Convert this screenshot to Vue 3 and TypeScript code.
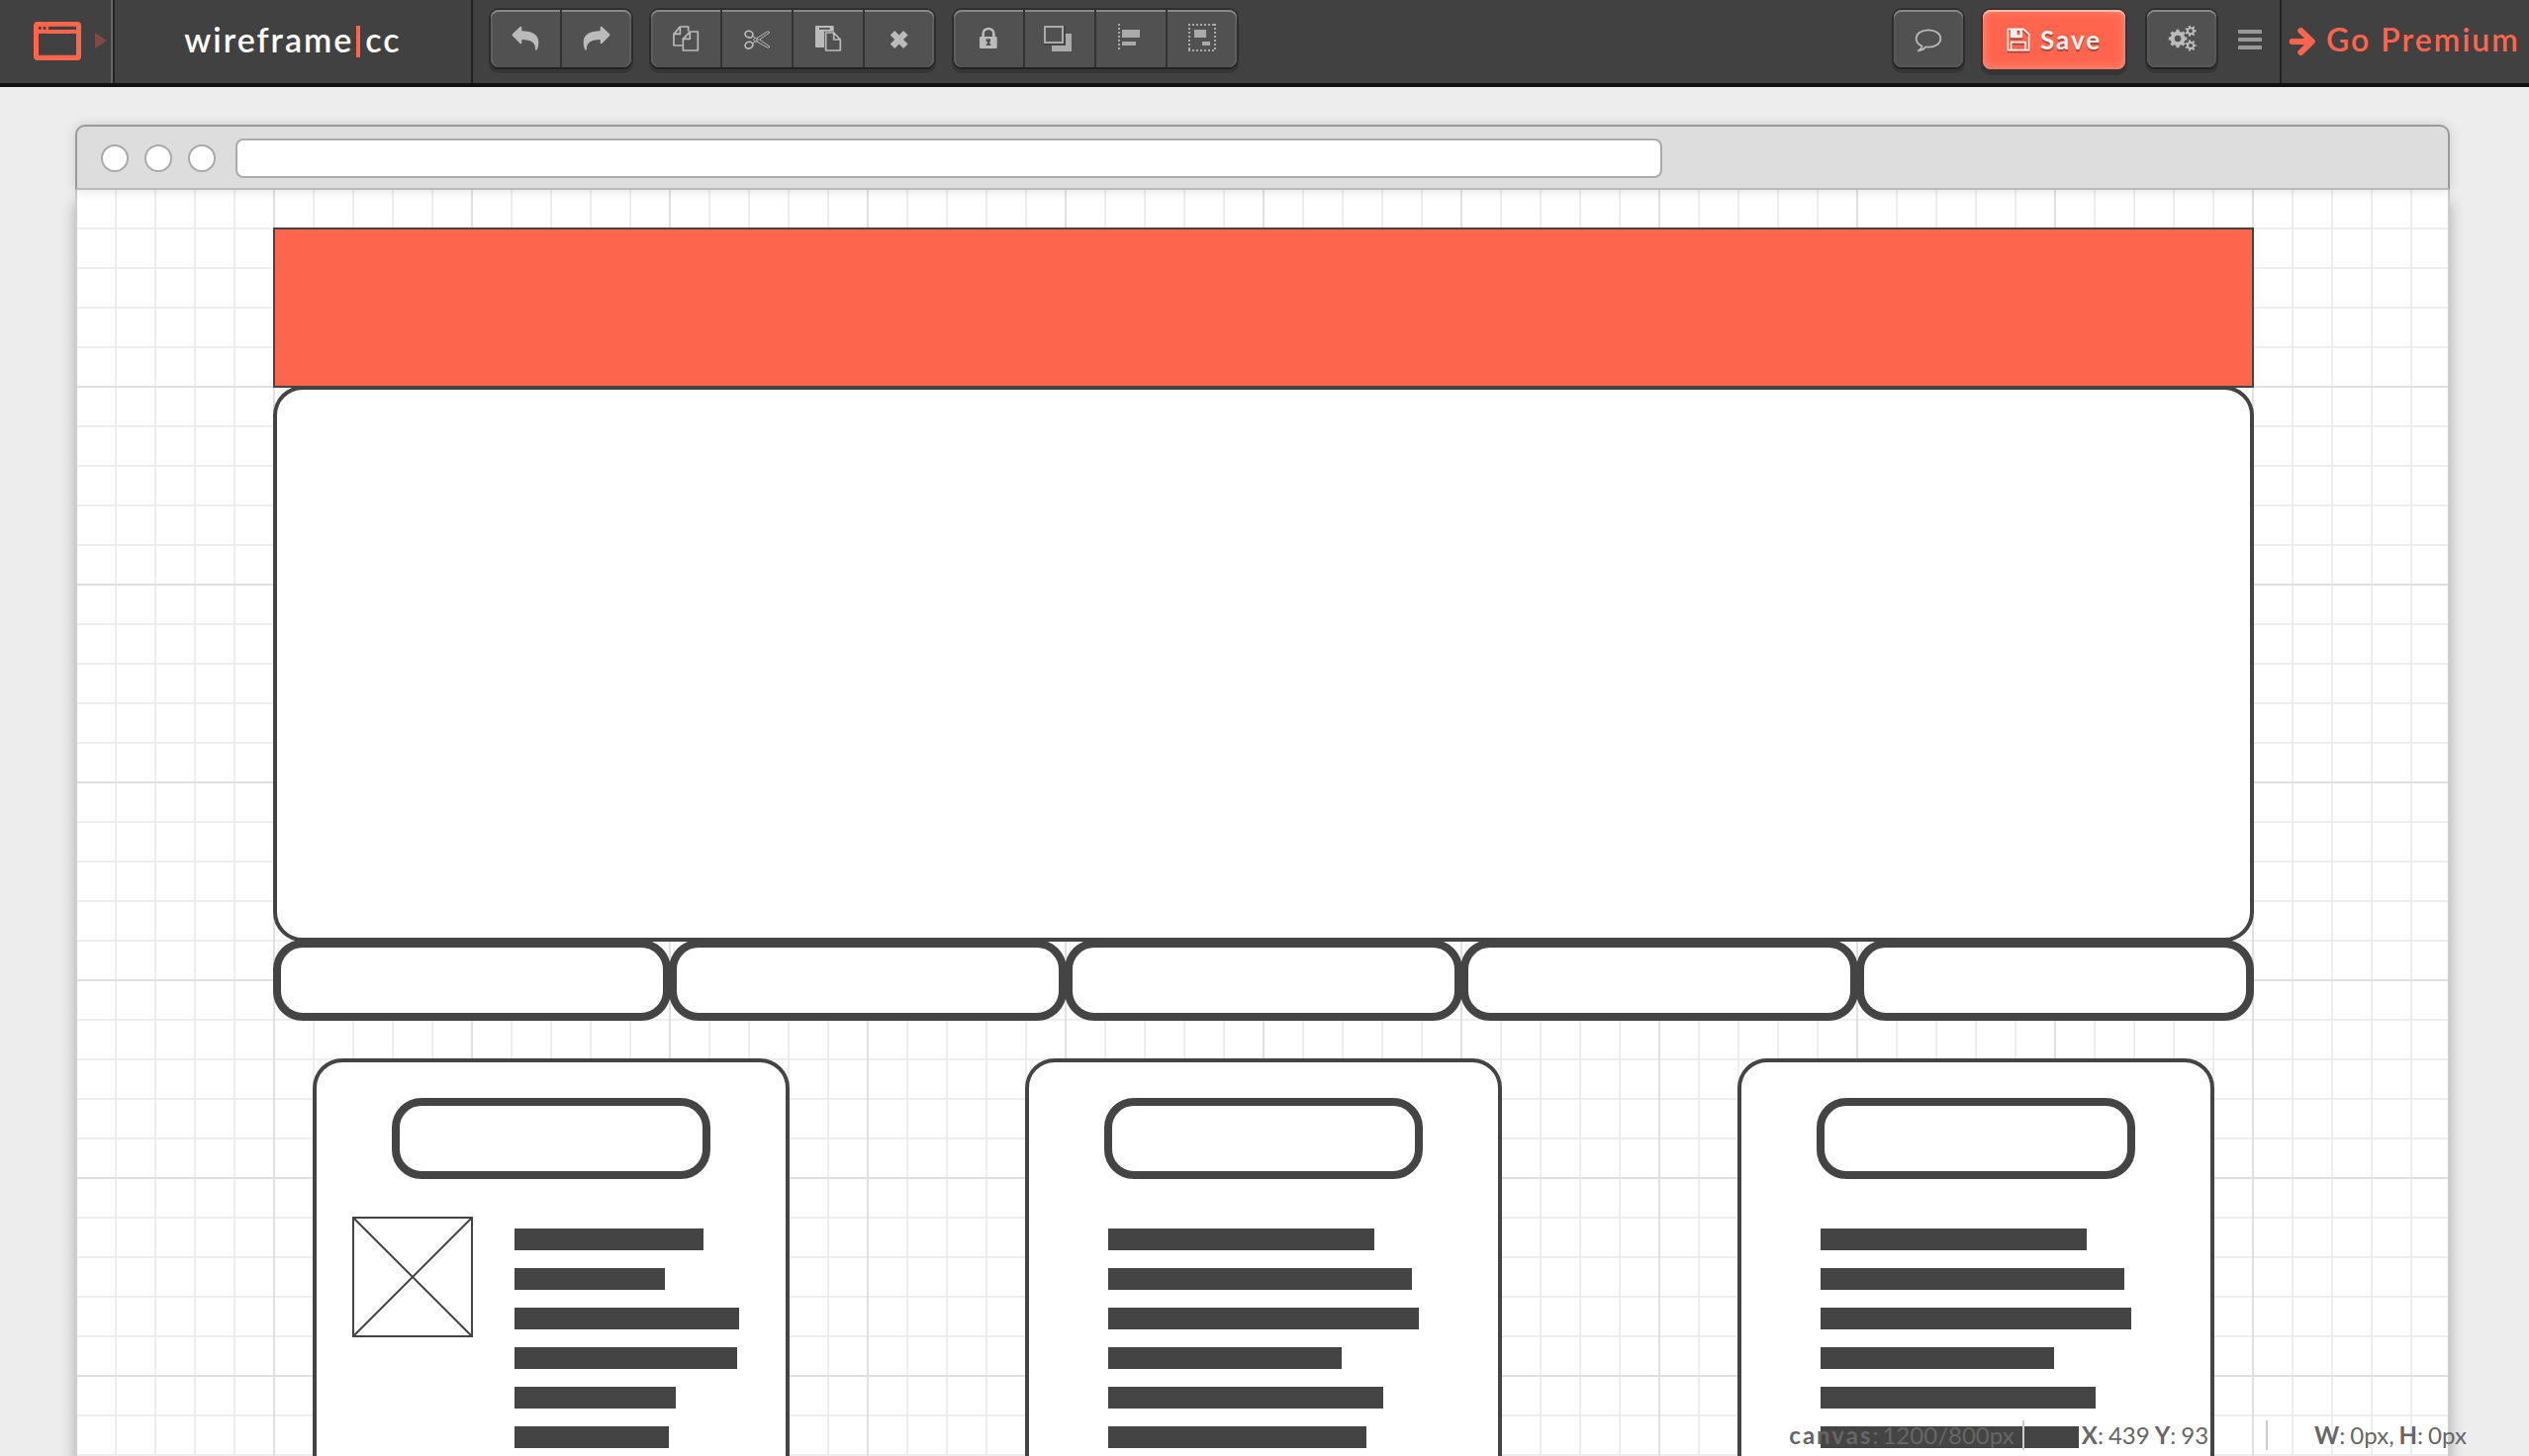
<script setup lang="ts">
interface Tool {
  name: string
  icon: string
}

interface Card {
  picture: boolean
  lines: number[]
}

const groups: Tool[][] = [
  [
    { name: 'Undo', icon: 'undo' },
    { name: 'Redo', icon: 'redo' },
  ],
  [
    { name: 'Copy', icon: 'copy' },
    { name: 'Cut', icon: 'cut' },
    { name: 'Paste', icon: 'paste' },
    { name: 'Delete', icon: 'delete' },
  ],
  [
    { name: 'Lock', icon: 'lock' },
    { name: 'Arrange', icon: 'layers' },
    { name: 'Align', icon: 'align' },
    { name: 'Group', icon: 'group' },
  ],
]

const tabs = 5

const cards: Card[] = [
  { picture: true, lines: [191, 152, 227, 225, 163, 156, 210] },
  { picture: false, lines: [269, 307, 314, 236, 278, 261, 290] },
  { picture: false, lines: [269, 307, 314, 236, 278, 261, 290] },
]

function gear(cx: number, cy: number, outer: number, inner: number, hole: number, teeth: number): string {
  const points: string[] = []
  const step = (Math.PI * 2) / teeth
  for (let i = 0; i < teeth; i++) {
    const a = i * step
    const corners: [number, number][] = [
      [-0.3, inner],
      [-0.2, outer],
      [0.2, outer],
      [0.3, inner],
    ]
    for (const [offset, r] of corners) {
      const t = a + offset * step
      points.push(`${(cx + r * Math.cos(t)).toFixed(1)} ${(cy + r * Math.sin(t)).toFixed(1)}`)
    }
  }
  const ring = `M${cx - hole} ${cy}a${hole} ${hole} 0 1 0 ${hole * 2} 0a${hole} ${hole} 0 1 0 ${-hole * 2} 0Z`
  return `M${points.join('L')}Z${ring}`
}

const gears = gear(93, 87, 28, 22, 10, 8) + gear(132, 64, 17, 12, 6, 7) + gear(132, 108, 17, 12, 6, 7)
</script>

<template>
  <div class="app">
    <header class="toolbar">
      <button class="stencil" type="button" aria-label="Browser window">
        <svg class="window-icon" viewBox="0 0 144 117" aria-hidden="true">
          <path
            fill-rule="evenodd"
            d="M12 0H132Q144 0 144 12V105Q144 117 132 117H12Q0 117 0 105V12Q0 0 12 0ZM15 36V101H129V36ZM45 14V24H129V14ZM14 19a5 5 0 1 0 10 0a5 5 0 1 0 -10 0ZM28 19a5 5 0 1 0 10 0a5 5 0 1 0 -10 0Z"
          />
        </svg>
        <span class="caret"></span>
      </button>
      <a class="brand" href="#">wireframe<i class="pipe"></i>cc</a>

      <nav class="tools" aria-label="Editing">
        <div v-for="(group, g) in groups" :key="g" class="group">
          <button v-for="tool in group" :key="tool.name" class="tool" type="button" :aria-label="tool.name">
            <svg class="glyph" viewBox="0 0 210 174" aria-hidden="true">
              <path
                v-if="tool.icon === 'undo' || tool.icon === 'redo'"
                :transform="tool.icon === 'redo' ? 'translate(210 0) scale(-1 1)' : undefined"
                d="M66 73L89 51Q94 48 94 54V64C124 64 145 74 145 98C145 108 143 116 139 122L135 121C137 101 124 90 94 90V99Q94 105 89 102L66 79Q64 76 66 73Z"
              />
              <g v-else-if="tool.icon === 'copy'" class="outline">
                <path d="M95 108H69V73L88 51H113V65M88 51V73H69" />
                <path class="sheet" d="M97 123V88L118 66H142V123ZM118 66V88H97" />
              </g>
              <g v-else-if="tool.icon === 'cut'" class="outline">
                <ellipse cx="81" cy="74" rx="12" ry="10" transform="rotate(20 81 74)" />
                <ellipse cx="81" cy="107" rx="12" ry="10" transform="rotate(-20 81 107)" />
                <path
                  class="fine"
                  d="M92 80L103 87L136 66Q143 64 143 69L113 90L143 111Q143 116 136 114L103 95L92 101M101 84L94 90L101 97"
                />
                <circle class="fine" cx="106" cy="91" r="3" />
              </g>
              <g v-else-if="tool.icon === 'paste'">
                <path fill-rule="evenodd" d="M69 48H119Q122 48 122 51V114H69Q66 114 66 111V51Q66 48 69 48ZM78 54V59H110V54Z" />
                <path class="cover" d="M93 65H124L146 86V128H93Z" />
                <path class="outline" d="M98 69V123H142V90L122 69ZM122 69V90H142" />
              </g>
              <path v-else-if="tool.icon === 'delete'" class="cross" d="M84 70L124 110M124 70L84 110" />
              <g v-else-if="tool.icon === 'lock'">
                <path class="shackle" d="M89 82V72C89 52 121 52 121 72V82" />
                <path
                  fill-rule="evenodd"
                  d="M82 81H128Q131 81 131 84V113Q131 117 127 117H83Q78 117 78 113V84Q78 81 82 81ZM98 88V97H102V103H98V108H112V103H109V97H111V88Z"
                />
              </g>
              <g v-else-if="tool.icon === 'layers'" class="dim">
                <path d="M81 72H141V126H81Z" />
                <path class="gap" d="M57 48H123V108H57Z" />
                <path class="cover" d="M60 51H114V99H60Z" />
                <path fill-rule="evenodd" d="M57 48H117V102H57ZM63 54V96H111V54Z" />
              </g>
              <g v-else-if="tool.icon === 'align'" class="dim">
                <path class="dots" d="M69 42V126" />
                <path d="M78 60H132V84H78ZM78 96H120V108H78Z" />
              </g>
              <g v-else class="dim">
                <path class="dots" d="M63 45H147M63 123H147M66 42V126M144 42V126" />
                <path d="M81 60H117V84H81ZM105 96H129V108H105Z" />
              </g>
            </svg>
          </button>
        </div>
      </nav>

      <div class="actions">
        <div class="group">
          <button class="tool" type="button" aria-label="Comments">
            <svg class="glyph" viewBox="0 0 210 174" aria-hidden="true">
              <path
                class="bubble"
                d="M86 110C74 105 68 96 68 87C68 72 84 61 105 61S142 72 142 87S126 113 105 113C102 113 99 113 97 112C91 119 83 123 74 124C82 119 85 115 86 110Z"
              />
            </svg>
          </button>
        </div>
        <button class="save" type="button">
          <svg class="floppy" viewBox="0 0 72 72" aria-hidden="true">
            <path class="floppy-line" d="M4 4H51L68 20V68H4ZM14 68V44H57V68M14 4V28H46V4" />
            <path class="floppy-fill" fill-rule="evenodd" d="M14 4H46V28H14ZM32 8V22H40V8Z" />
          </svg>
          Save
        </button>
        <div class="group">
          <button class="tool" type="button" aria-label="Settings">
            <svg class="glyph" viewBox="0 0 210 174" aria-hidden="true">
              <path fill-rule="evenodd" :d="gears" />
            </svg>
          </button>
        </div>
        <button class="menu" type="button" aria-label="Menu"><i></i><i></i><i></i></button>
      </div>
      <a class="premium" href="#">
        <svg class="arrow" viewBox="0 0 84 84" aria-hidden="true">
          <path d="M11 42H64" />
          <path class="head" d="M37 9L71 42L37 75" />
        </svg>
        Go Premium
      </a>
    </header>

    <main class="browser">
      <div class="chrome">
        <i class="dot"></i><i class="dot"></i><i class="dot"></i>
        <input class="address" type="text" aria-label="Address" />
      </div>
      <div class="canvas">
        <div class="banner"></div>
        <div class="hero"></div>
        <div class="tabs">
          <div v-for="n in tabs" :key="n" class="tab"></div>
        </div>
        <div class="cards">
          <section v-for="(card, c) in cards" :key="c" class="card">
            <div class="title"></div>
            <div class="body" :class="{ pictured: card.picture }">
              <svg v-if="card.picture" class="picture" viewBox="0 0 122 122" aria-hidden="true">
                <path d="M1 1H121V121H1Z" />
                <path d="M1 1L121 121M121 1L1 121" />
              </svg>
              <div class="lines">
                <div v-for="(w, i) in card.lines" :key="i" class="line" :style="{ width: w + 'px' }"></div>
              </div>
            </div>
          </section>
        </div>
      </div>
    </main>

    <footer class="status">
      <div class="cell size">
        <span><b class="wide">canvas</b>:</span><span>1200/800px</span>
      </div>
      <div class="cell position">
        <span><b>X</b>:</span><span>439</span><span><b>Y</b>:</span><span>93</span>
      </div>
      <div class="cell extent">
        <span><b>W</b>:</span><span>0px,</span><span><b>H</b>:</span><span>0px</span>
      </div>
    </footer>
  </div>
</template>

<style>
body {
  margin: 0;
  background: #ededed;
}
</style>

<style scoped>
.app {
  position: relative;
  height: 100vh;
  overflow: hidden;
  background: #ededed;
  font-family: Lato, 'Open Sans', sans-serif;
}

.app *,
.app {
  box-sizing: border-box;
}

button {
  margin: 0;
  padding: 0;
  border: 0;
  background: none;
  font: inherit;
  color: inherit;
}

a {
  text-decoration: none;
}

.toolbar {
  display: flex;
  height: 88px;
  border-bottom: 4px solid #111;
  background: #414141;
}

.stencil {
  display: flex;
  align-items: center;
  gap: 14px;
  width: 116px;
  padding: 0 0 2px 34px;
  border-right: 2px solid #222;
  box-shadow: inset -2px 0 0 #666;
}

.window-icon {
  width: 48px;
  height: 39px;
  fill: #ff654d;
}

.caret {
  border: 8px solid transparent;
  border-left: 12px solid #7e4b44;
  border-right: 0;
}

.brand {
  display: flex;
  align-items: center;
  justify-content: center;
  width: 362px;
  padding-bottom: 6px;
  border-right: 2px solid #222;
  color: #fff;
  font-size: 34px;
  font-weight: 600;
  letter-spacing: 2px;
}

.pipe {
  width: 4px;
  height: 32px;
  margin: 6px 5px 0 3px;
  background: #ff654d;
}

.tools {
  display: flex;
  gap: 20px;
  padding: 10px 0 0 18px;
}

.group {
  display: flex;
  gap: 2px;
  height: 58px;
  border-radius: 8px;
  background: #333;
  box-shadow:
    0 2px 0 #222,
    0 0 0 2px #2e2e2e,
    0 4px 0 2px #353535;
}

.tool {
  width: 70px;
  height: 58px;
  background: #515151;
  box-shadow: inset 0 2px 0 #888;
}

.tool:first-child {
  border-radius: 8px 0 0 8px;
  box-shadow:
    inset 0 2px 0 #888,
    inset 2px 0 0 #5e5e5e;
}

.tool:last-child {
  border-radius: 0 8px 8px 0;
  box-shadow:
    inset 0 2px 0 #888,
    inset -2px 0 0 #5e5e5e;
}

.tool:only-child {
  border-radius: 8px;
  box-shadow:
    inset 0 2px 0 #888,
    inset 0 0 0 2px #585858;
}

.glyph {
  display: block;
  width: 70px;
  height: 58px;
  fill: #bbb;
}

.outline {
  fill: none;
  stroke: #bbb;
  stroke-width: 5px;
  stroke-linejoin: round;
}

.sheet,
.cover {
  fill: #515151;
}

.gap {
  fill: #444;
}

.fine {
  stroke-width: 3px;
}

.cross {
  stroke: #bbb;
  stroke-width: 19px;
}

.shackle {
  fill: none;
  stroke: #bbb;
  stroke-width: 8px;
}

.dim {
  fill: #aaa;
}

.dots {
  fill: none;
  stroke: #aaa;
  stroke-width: 6px;
  stroke-dasharray: 6px 6px;
}

.bubble {
  fill: none;
  stroke: #bbb;
  stroke-width: 5px;
  stroke-linejoin: round;
}

.actions {
  display: flex;
  gap: 20px;
  margin-left: auto;
  padding: 10px 18px 0 0;
}

.actions .group + .menu {
  margin-left: 2px;
}

.save {
  display: flex;
  align-items: center;
  justify-content: center;
  gap: 10px;
  width: 144px;
  height: 60px;
  border-radius: 8px;
  background: #ff654d;
  box-shadow:
    inset 0 2px 0 #ffb8ac,
    inset 0 0 10px #ff9a88,
    0 0 0 2px #353535,
    0 4px 0 2px #353535;
  color: #eee;
  font-size: 26px;
  font-weight: 700;
  letter-spacing: 2px;
  text-shadow: 0 2px 0 #a8483a;
}

.save + .group {
  margin-left: 2px;
}

.floppy {
  width: 24px;
  height: 24px;
  filter: drop-shadow(0 2px 0 #a8483a);
}

.floppy-line {
  fill: none;
  stroke: #eee;
  stroke-width: 5px;
  stroke-linejoin: round;
}

.floppy-fill {
  fill: #eee;
}

.menu {
  display: flex;
  flex-direction: column;
  gap: 4px;
  width: 24px;
  padding-top: 20px;
}

.menu i {
  height: 4px;
  border-radius: 1px;
  background: #999;
}

.premium {
  display: flex;
  align-items: center;
  gap: 10px;
  width: 252px;
  padding: 0 0 6px 7px;
  border-left: 2px solid #222;
  color: #ff654d;
  font-size: 32px;
  font-weight: 600;
  letter-spacing: 2px;
  white-space: nowrap;
}

.arrow {
  flex: none;
  width: 28px;
  height: 28px;
  margin-top: 6px;
  fill: none;
  stroke: #ff654d;
  stroke-width: 18px;
  stroke-linecap: round;
}

.head {
  stroke-width: 18px;
  stroke-linejoin: round;
}

.browser {
  margin: 38px 80px 0 76px;
}

.chrome {
  position: relative;
  display: flex;
  align-items: center;
  gap: 16px;
  height: 66px;
  padding: 2px 24px 0;
  border: 2px solid #999;
  border-bottom-color: #bbb;
  border-radius: 10px 10px 0 0;
  background: #ddd;
  box-shadow: 0 0 12px rgba(0, 0, 0, 0.14);
}

.dot {
  flex: none;
  width: 28px;
  height: 28px;
  border: 2px solid #aaa;
  border-radius: 50%;
  background: #fff;
}

.address {
  flex: 0 1 1442px;
  min-width: 0;
  height: 40px;
  margin-left: 4px;
  padding: 0 12px;
  border: 2px solid #aaa;
  border-radius: 8px;
  background: #fff;
  font: 20px Lato, sans-serif;
}

.canvas {
  padding: 38px 196px 0 198px;
  border: solid #ccc;
  border-width: 0 2px;
  background-color: #fff;
  background-image:
    linear-gradient(to right, #e0e0e0 2px, transparent 2px),
    linear-gradient(to bottom, #e0e0e0 2px, transparent 2px),
    linear-gradient(to right, #eee 2px, transparent 2px),
    linear-gradient(to bottom, #eee 2px, transparent 2px);
  background-position:
    198px 0,
    0 198px,
    38px 0,
    0 38px;
  background-size:
    200px 200px,
    200px 200px,
    40px 40px,
    40px 40px;
  box-shadow: 0 12px 14px rgba(0, 0, 0, 0.28);
}

.banner {
  height: 162px;
  border: 2px solid #444;
  background: #fd654d;
}

.hero {
  height: 562px;
  margin-top: -2px;
  border: 4px solid #444;
  border-radius: 30px;
  background: #fff;
}

.tabs {
  display: flex;
  margin-top: -2px;
}

.tab {
  flex: 1;
  height: 82px;
  border: 8px solid #444;
  border-radius: 30px;
  background: #fff;
}

.tab + .tab {
  margin-left: -2px;
}

.cards {
  display: flex;
  justify-content: space-between;
  margin-top: 38px;
  padding: 0 40px;
}

.card {
  width: 482px;
  height: 602px;
  padding-top: 36px;
  border: 4px solid #444;
  border-radius: 30px;
  background: #fff;
}

.title {
  width: 322px;
  height: 82px;
  margin: 0 auto;
  border: 8px solid #444;
  border-radius: 30px;
}

.body {
  display: flex;
  gap: 42px;
  margin-top: 38px;
  padding-left: 80px;
}

.pictured {
  padding-left: 36px;
}

.picture {
  flex: none;
  width: 122px;
  height: 122px;
  fill: none;
  stroke: #444;
  stroke-width: 2px;
}

.lines {
  display: flex;
  flex-direction: column;
  gap: 18px;
  padding-top: 12px;
}

.line {
  height: 22px;
  background: #444;
}

.status {
  position: absolute;
  right: 16px;
  bottom: 6px;
  display: flex;
  color: #666;
  font-size: 24px;
  line-height: 30px;
}

.cell {
  display: flex;
  justify-content: center;
  gap: 5px;
  width: 248px;
  white-space: nowrap;
}

.cell + .cell {
  border-left: 2px solid #ccc;
}

.size {
  gap: 4px;
  padding-left: 4px;
}

.position {
  width: 246px;
}

.extent {
  width: 250px;
}

.wide {
  letter-spacing: 2px;
}
</style>
